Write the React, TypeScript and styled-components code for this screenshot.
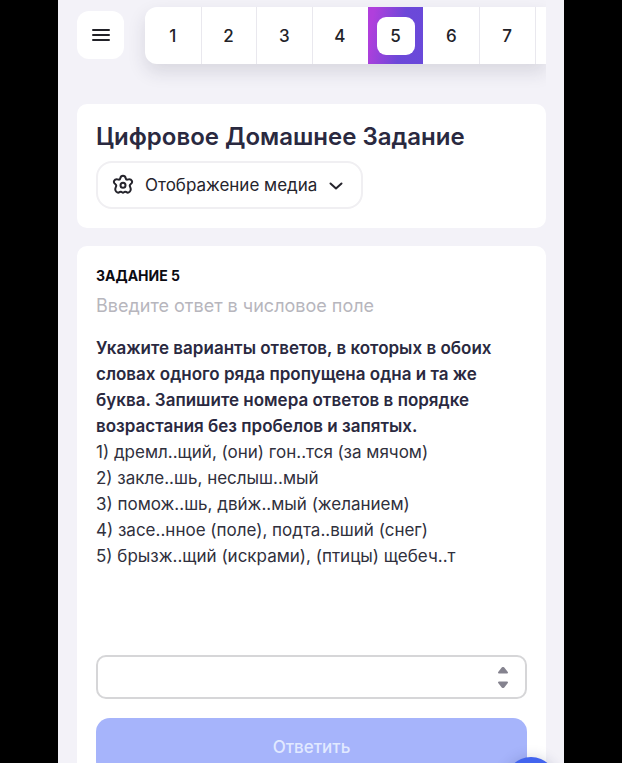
import React, { useState } from "react";
import styled, { createGlobalStyle } from "styled-components";

const GlobalStyle = createGlobalStyle`
  *, *::before, *::after { box-sizing: border-box; }
  body {
    margin: 0;
    background: #000;
    font-family: Inter, "Liberation Sans", sans-serif;
    color: #2a2940;
  }
  button, input { font: inherit; color: inherit; }
`;

const Stage = styled.div`
  height: 100vh;
  padding: 0 58px;
  background: #000;
`;

const Screen = styled.div`
  position: relative;
  height: 100%;
  overflow-y: auto;
  scrollbar-width: none;
  padding: 7px 18px 20px 19px;
  background: #f3f2f8;
`;

const TopBar = styled.header`
  display: flex;
  align-items: flex-start;
  gap: 21px;
  margin-bottom: 40px;
`;

const MenuButton = styled.button`
  display: grid;
  place-items: center;
  flex: none;
  width: 47px;
  height: 48px;
  margin-top: 4px;
  padding: 0;
  border: 0;
  border-radius: 12px;
  background: #fff;
  color: #222228;
`;

const TaskNav = styled.nav`
  flex: 1;
  display: grid;
  grid-template-columns: repeat(7, 5fr) 1fr;
  height: 57px;
  border-radius: 12px 0 0 12px;
  background: #fff;
  box-shadow: 0 8px 18px rgba(40, 40, 60, 0.13);
  clip-path: inset(-7px 0 -40px -20px);
`;

const TaskTab = styled.button<{ $active?: boolean }>`
  display: grid;
  place-items: center;
  min-width: 0;
  padding: 0;
  border: 0;
  box-shadow: ${(p) => (p.$active ? "none" : "1px 0 0 #e9e8ee")};
  background: ${(p) =>
    p.$active ? "linear-gradient(100deg, #b03fdc 10%, #6c48d8 60%, #6949da)" : "transparent"};
  color: #222228;
  font-size: 17px;
  font-weight: 500;
  line-height: 24px;

  &:last-child { box-shadow: none; }
`;

const TabNumber = styled.span<{ $active: boolean }>`
  display: grid;
  place-items: center;
  width: 38px;
  height: 38px;
  border-radius: 9px;
  background: ${(p) => (p.$active ? "#fff" : "transparent")};
`;

const Card = styled.section`
  margin-bottom: 18px;
  padding: 18px 19px 19px;
  border-radius: 10px;
  background: #fff;
`;

const Title = styled.h1`
  margin: 0 0 9px;
  font-size: 24px;
  font-weight: 600;
  line-height: 30px;
`;

const MediaButton = styled.button`
  display: flex;
  align-items: center;
  gap: 11px;
  height: 48px;
  padding: 0 17px 0 14px;
  border: 2px solid #f0eff2;
  border-radius: 16px;
  background: #fff;
  color: #25242c;
  font-size: 17px;
  font-weight: 400;
  line-height: 24px;
`;

const TaskLabel = styled.h2`
  margin: 2px 0 8px;
  color: #0b0b12;
  font-size: 14px;
  font-weight: 700;
  line-height: 20px;
`;

const Hint = styled.p`
  margin: 0 0 17px;
  color: #b7b6bd;
  font-size: 18px;
  line-height: 24px;
`;

const Question = styled.p`
  margin: 0;
  font-size: 17px;
  font-weight: 600;
  line-height: 26px;
`;

const Options = styled.ul`
  margin: 0 0 86px;
  padding: 0;
  list-style: none;
  color: #30303d;
  font-size: 17px;
  font-weight: 400;
  line-height: 26px;
`;

const AnswerForm = styled.form`
  display: flex;
  flex-direction: column;
  gap: 19px;
`;

const NumberField = styled.div`
  display: flex;
  align-items: center;
  height: 44px;
  padding-right: 16px;
  border: 2px solid #d6d6d8;
  border-radius: 10px;
`;

const NumberInput = styled.input`
  flex: 1;
  min-width: 0;
  height: 100%;
  padding: 0 14px;
  border: 0;
  outline: 0;
  background: transparent;
  font-size: 17px;
  appearance: textfield;

  &::-webkit-inner-spin-button,
  &::-webkit-outer-spin-button { appearance: none; margin: 0; }
`;

const Stepper = styled.div`
  display: flex;
  flex-direction: column;
  gap: 7px;
`;

const StepButton = styled.button`
  display: block;
  width: 12px;
  height: 8px;
  padding: 0;
  border: 0;
  background: transparent;
  color: #85838f;

  svg { display: block; }
`;

const SubmitButton = styled.button`
  height: 57px;
  border: 0;
  border-radius: 14px;
  background: #a6b4fb;
  color: #e1e9ff;
  font-size: 17px;
  font-weight: 500;
`;

const ChatButton = styled.button`
  position: fixed;
  right: 65px;
  bottom: -46px;
  width: 52px;
  height: 52px;
  border: 0;
  border-radius: 50%;
  background: #4264ee;
  box-shadow: 0 1px 14px rgba(30, 40, 90, 0.22);
`;

const MenuIcon = () => (
  <svg width="20" height="16" viewBox="0 0 20 16" stroke="currentColor" strokeWidth="2" strokeLinecap="round" aria-hidden="true">
    <path d="M2 3h16M2 8h16M2 13h16" />
  </svg>
);

const GearIcon = () => (
  <svg width="22" height="22" viewBox="0 0 22 22" fill="none" stroke="currentColor" strokeWidth="2" strokeLinejoin="round" aria-hidden="true">
    <path d="M8.300 4.200Q8.800 1.800 11 1.800T13.700 4.200Q14 5.800 15.500 5.600Q18.800 4.800 19.800 6.800T18.600 10.200Q17.300 11.200 18 12.600Q19.600 15.800 17.800 17.600T14.300 18Q12.800 17.200 11.800 18.400Q11 19.300 10.200 18.400Q9.200 17.200 7.700 18Q6 19.400 4.200 17.600T4 12.600Q4.700 11.200 3.400 10.200Q1.200 8.800 2.200 6.800T6.500 5.600Q8 5.800 8.300 4.200Z" />
    <circle cx="11" cy="11.200" r="2.500" />
  </svg>
);

const ChevronIcon = () => (
  <svg width="16" height="10" viewBox="0 0 16 10" fill="none" stroke="currentColor" strokeWidth="2" strokeLinecap="round" strokeLinejoin="round" aria-hidden="true">
    <path d="M2.500 3.500L8 8.500l5.500-5" />
  </svg>
);

const Triangle = ({ down = false }: { down?: boolean }) => (
  <svg width="12" height="8" viewBox="0 0 12 8" fill="currentColor" stroke="currentColor" strokeWidth="2" strokeLinejoin="round" aria-hidden="true">
    <path d={down ? "M2 1.500h8L6.500 6h-1z" : "M2 6.500h8L6.500 2h-1z"} />
  </svg>
);

const TASKS = [1, 2, 3, 4, 5, 6, 7];

const OPTIONS = [
  "1) дремл..щий, (они) гон..тся (за мячом)",
  "2) закле..шь, неслыш..мый",
  "3) помож..шь, дви́ж..мый (желанием)",
  "4) засе..нное (поле), подта..вший (снег)",
  "5) брызж..щий (искрами), (птицы) щебеч..т",
];

export default function App() {
  const [current, setCurrent] = useState(5);
  const [answer, setAnswer] = useState("");
  const step = (delta: number) => setAnswer(String(Number(answer) + delta));

  return (
    <Stage>
      <GlobalStyle />
      <Screen>
        <TopBar>
          <MenuButton type="button" aria-label="Меню">
            <MenuIcon />
          </MenuButton>
          <TaskNav aria-label="Задания">
            {TASKS.map((n) => (
              <TaskTab key={n} type="button" $active={n === current} onClick={() => setCurrent(n)}>
                <TabNumber $active={n === current}>{n}</TabNumber>
              </TaskTab>
            ))}
            <TaskTab type="button" aria-label="Следующие задания" />
          </TaskNav>
        </TopBar>

        <main>
          <Card>
            <Title>Цифровое Домашнее Задание</Title>
            <MediaButton type="button" aria-haspopup="menu">
              <GearIcon />
              Отображение медиа
              <ChevronIcon />
            </MediaButton>
          </Card>

          <Card>
            <TaskLabel>ЗАДАНИЕ {current}</TaskLabel>
            <Hint id="hint">Введите ответ в числовое поле</Hint>
            <Question>
              Укажите варианты ответов, в которых в обоих словах одного ряда пропущена одна и та же
              буква. Запишите номера ответов в порядке возрастания без пробелов и запятых.
            </Question>
            <Options>
              {OPTIONS.map((text) => (
                <li key={text}>{text}</li>
              ))}
            </Options>
            <AnswerForm onSubmit={(e) => e.preventDefault()}>
              <NumberField>
                <NumberInput
                  type="number"
                  aria-labelledby="hint"
                  value={answer}
                  onChange={(e) => setAnswer(e.target.value)}
                />
                <Stepper>
                  <StepButton type="button" aria-label="Увеличить" onClick={() => step(1)}>
                    <Triangle />
                  </StepButton>
                  <StepButton type="button" aria-label="Уменьшить" onClick={() => step(-1)}>
                    <Triangle down />
                  </StepButton>
                </Stepper>
              </NumberField>
              <SubmitButton type="submit">Ответить</SubmitButton>
            </AnswerForm>
          </Card>
        </main>
        <ChatButton type="button" aria-label="Чат" />
      </Screen>
    </Stage>
  );
}
